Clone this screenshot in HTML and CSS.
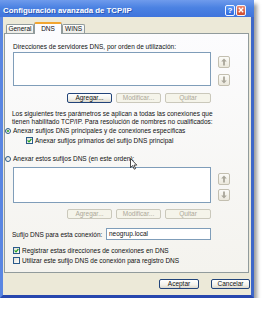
FILE: index.html
```html
<!DOCTYPE html>
<html lang="es">
<head>
<meta charset="utf-8">
<title>Configuración avanzada de TCP/IP</title>
<link rel="stylesheet" href="styles.css">
</head>
<body>
<div class="window">
  <div class="titlebar">
    <span class="title">Configuración avanzada de TCP/IP</span>
    <span class="tb-btn help">?</span>
    <span class="tb-btn close"><svg width="6" height="6" viewBox="0 0 6 6"><path d="M0.8 0.8 L5.2 5.2 M5.2 0.8 L0.8 5.2" stroke="#fff" stroke-width="1.3"/></svg></span>
  </div>
  <div class="frame">
    <div class="tabs">
      <div class="tab t-general">General</div>
      <div class="tab t-dns sel">DNS</div>
      <div class="tab t-wins">WINS</div>
    </div>
    <div class="panel">
      <div class="label">Direcciones de servidores DNS, por orden de utilización:</div>
      <div class="listrow lr1">
        <div class="list"></div>
        <div class="arrows a1">
          <div class="arrow"><svg width="8" height="8" viewBox="0 0 8 8"><path d="M4 0.5 L1.2 3.5 H3.1 V7.5 H4.9 V3.5 H6.8 Z" fill="#a9a69a"/></svg></div>
          <div class="arrow"><svg width="8" height="8" viewBox="0 0 8 8"><path d="M4 7.5 L1.2 4.5 H3.1 V0.5 H4.9 V4.5 H6.8 Z" fill="#a9a69a"/></svg></div>
        </div>
      </div>
      <div class="btnrow br1">
        <div class="btn w45">Agregar...</div>
        <div class="btn dis w45">Modificar...</div>
        <div class="btn dis w46">Quitar</div>
      </div>
      <div class="para">Los siguientes tres parámetros se aplican a todas las conexiones que<br>tienen habilitado TCP/IP. Para resolución de nombres no cualificados:</div>
      <div class="opt radio r1"><span class="rbox on"></span>Anexar sufijos DNS principales y de conexiones específicas</div>
      <div class="opt check c1"><span class="cbox on"><svg width="5" height="5" viewBox="0 0 5 5"><path d="M0.6 2.4 L2 3.8 L4.4 1" stroke="#21a121" stroke-width="1.2" fill="none"/></svg></span>Anexar sufijos primarios del sufijo DNS principal</div>
      <div class="opt radio r2"><span class="rbox"></span>Anexar estos sufijos DNS (en este orden):</div>
      <div class="listrow lr2">
        <div class="list"></div>
        <div class="arrows a2">
          <div class="arrow"><svg width="8" height="8" viewBox="0 0 8 8"><path d="M4 0.5 L1.2 3.5 H3.1 V7.5 H4.9 V3.5 H6.8 Z" fill="#a9a69a"/></svg></div>
          <div class="arrow"><svg width="8" height="8" viewBox="0 0 8 8"><path d="M4 7.5 L1.2 4.5 H3.1 V0.5 H4.9 V4.5 H6.8 Z" fill="#a9a69a"/></svg></div>
        </div>
      </div>
      <div class="btnrow br2">
        <div class="btn dis w45">Agregar...</div>
        <div class="btn dis w45">Modificar...</div>
        <div class="btn dis w46">Quitar</div>
      </div>
      <div class="suffix">
        <span class="suffix-label">Sufijo DNS para esta conexión:</span>
        <span class="input">neogrup.local</span>
      </div>
      <div class="opt check c2"><span class="cbox on"><svg width="5" height="5" viewBox="0 0 5 5"><path d="M0.6 2.4 L2 3.8 L4.4 1" stroke="#21a121" stroke-width="1.2" fill="none"/></svg></span>Registrar estas direcciones de conexiones en DNS</div>
      <div class="opt check c3"><span class="cbox"></span>Utilizar este sufijo DNS de conexión para registro DNS</div>
    </div>
    <div class="footer">
      <div class="btn w40">Aceptar</div>
      <div class="btn w39">Cancelar</div>
    </div>
  </div>
  <svg class="cursor" width="8" height="12" viewBox="0 0 8 12"><path d="M0.5 0.5 L0.5 9.5 L2.6 7.6 L4.2 11.2 L5.6 10.6 L4 7.1 L6.8 7.1 Z" fill="#fff" stroke="#000" stroke-width="0.7"/></svg>
</div>
</body>
</html>
```

FILE: styles.css
```css
html, body {
  margin: 0;
  padding: 0;
  background: #ffffff;
}
body {
  font-family: "Liberation Sans", Arial, sans-serif;
  font-size: 6.5px;
  color: #111;
}
.window {
  position: relative;
  width: 254px;
  height: 298px;
  display: flex;
  flex-direction: column;
  box-shadow: 3px 4px 4px rgba(0, 0, 0, 0.4);
}
.titlebar {
  height: 17px;
  box-sizing: border-box;
  padding: 3px 8px 0 3px;
  display: flex;
  align-items: center;
  background: linear-gradient(#6f9bec, #4b82e2 45%, #3f74dc);
  color: #fff;
}
.title {
  flex: 1;
  font-weight: bold;
  font-size: 7.8px;
  white-space: nowrap;
  text-shadow: 1px 1px 0 #2a57b8;
}
.tb-btn {
  width: 10px;
  height: 11px;
  box-sizing: border-box;
  border: 1px solid #f2f5ff;
  border-radius: 2px;
  display: flex;
  align-items: center;
  justify-content: center;
  color: #fff;
}
.help {
  background: linear-gradient(#5a98f6, #2f68dc);
  font-weight: bold;
  font-size: 8px;
  margin-right: 1px;
}
.close {
  background: linear-gradient(#ec8c74, #cd4a2e);
}
.frame {
  flex: 1;
  display: flex;
  flex-direction: column;
  background: #ece9d8;
  border-left: 3px solid #5a86e2;
  border-right: 3px solid #3e67c8;
  border-bottom: 3px solid #2747ae;
}
.tabs {
  display: flex;
  align-items: flex-end;
  height: 12px;
  margin: 5px 0 -1px 3px;
  position: relative;
  z-index: 1;
}
.tab {
  height: 9px;
  margin-bottom: 1px;
  box-sizing: border-box;
  border: 1px solid #919b9c;
  border-bottom: 0;
  border-radius: 2px 2px 0 0;
  background: linear-gradient(#ffffff, #ecebe6);
  line-height: 8px;
  text-align: center;
}
.t-general { width: 28px; }
.t-dns { width: 28px; }
.t-wins { width: 23px; }
.tab.sel {
  height: 12px;
  margin-bottom: 0;
  background: #fcfcfe;
  border-top: 2px solid #f2a52f;
  line-height: 9px;
}
.panel {
  margin-left: 1px;
  width: 245px;
  height: 240px;
  box-sizing: border-box;
  border: 1px solid #919b9c;
  background: linear-gradient(#fcfcfe, #f4f3ee);
  padding-left: 8px;
  display: flex;
  flex-direction: column;
}
.label {
  margin-top: 9px;
  height: 8px;
  line-height: 8px;
  white-space: nowrap;
}
.listrow {
  display: flex;
  gap: 7px;
}
.lr1 { margin-top: 1px; height: 35px; }
.lr2 { margin-top: 5px; height: 36px; }
.list {
  width: 198px;
  box-sizing: border-box;
  border: 1px solid #7f9db9;
  background: #fff;
}
.lr1 .list { height: 34px; }
.lr2 .list { height: 36px; }
.arrows {
  display: flex;
  flex-direction: column;
}
.a1 { padding-top: 4px; gap: 6px; }
.a2 { padding-top: 6px; gap: 4px; }
.arrow {
  width: 12px;
  height: 12px;
  box-sizing: border-box;
  border: 1px solid #c3bfb0;
  border-radius: 2px;
  background: linear-gradient(#fbfbf8, #ebe8dc);
  display: flex;
  align-items: center;
  justify-content: center;
}
.btnrow {
  width: 198px;
  height: 10px;
  display: flex;
  justify-content: flex-end;
  gap: 4px;
}
.br1 { margin-top: 6px; }
.br2 { margin-top: 6px; }
.btn {
  height: 10px;
  box-sizing: border-box;
  border: 1px solid #22447a;
  border-radius: 2px;
  background: linear-gradient(#ffffff, #f3f2ec 60%, #dcd8cc);
  line-height: 8px;
  text-align: center;
  color: #111;
  white-space: nowrap;
}
.btn.dis {
  border-color: #cac8bb;
  background: #f5f4ea;
  color: #aca899;
}
.w39 { width: 39px; }
.w40 { width: 40px; }
.w45 { width: 45px; }
.w46 { width: 46px; }
.para {
  margin-top: 7px;
  margin-left: -1px;
  height: 15px;
  line-height: 7.5px;
  white-space: nowrap;
}
.opt {
  height: 7px;
  line-height: 7px;
  display: flex;
  align-items: center;
  white-space: nowrap;
}
.r1 { margin-top: 2px; margin-left: -8px; }
.c1 { margin-top: 3px; margin-left: 13px; }
.r2 { margin-top: 11px; margin-left: -8px; }
.c2 { margin-top: 7px; }
.c3 { margin-top: 3px; }
.rbox {
  width: 6px;
  height: 6px;
  box-sizing: border-box;
  border: 1px solid #2a5a8a;
  border-radius: 50%;
  background: linear-gradient(135deg, #dcd9ce, #ffffff);
  margin-right: 2px;
  display: flex;
  align-items: center;
  justify-content: center;
}
.rbox.on::after {
  content: "";
  width: 2px;
  height: 2px;
  border-radius: 50%;
  background: #21a121;
}
.cbox {
  width: 7px;
  height: 7px;
  box-sizing: border-box;
  border: 1px solid #2a5a8a;
  background: linear-gradient(135deg, #e0ded3, #ffffff);
  margin-right: 2px;
  display: flex;
  align-items: center;
  justify-content: center;
}
.suffix {
  margin-top: 9px;
  margin-left: -1px;
  height: 12px;
  display: flex;
  align-items: center;
}
.suffix-label {
  width: 94px;
  white-space: nowrap;
}
.input {
  width: 105px;
  height: 12px;
  box-sizing: border-box;
  border: 1px solid #7f9db9;
  background: #fff;
  padding-left: 2px;
  line-height: 10px;
}
.footer {
  flex: 1;
  padding-top: 6px;
  padding-right: 1px;
  display: flex;
  justify-content: flex-end;
  gap: 12px;
}
.cursor {
  position: absolute;
  left: 130px;
  top: 158px;
}
```
